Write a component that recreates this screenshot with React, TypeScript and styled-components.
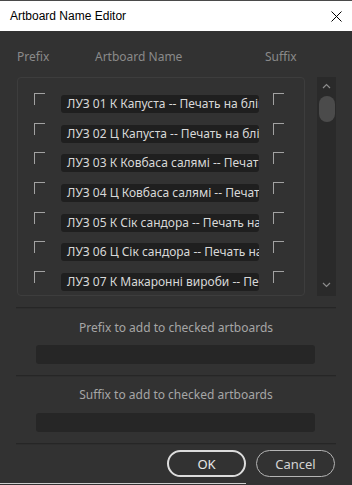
import styled, { createGlobalStyle } from "styled-components";

const GlobalStyle = createGlobalStyle`
    html, body {
        margin: 0;
        padding: 0;
        background: #323232;
    }
    * {
        box-sizing: border-box;
    }
`;

const Window = styled.div`
    width: 352px;
    height: 485px;
    display: flex;
    flex-direction: column;
    background: #323232;
    font-family: "Noto Sans", "Liberation Sans", sans-serif;
    font-size: 12px;
    overflow: hidden;
`;
const TitleBar = styled.div`
    height: 31px;
    flex: none;
    display: flex;
    align-items: center;
    justify-content: space-between;
    padding: 0 10px 0 10px;
    background: #ffffff;
    border-top: 1px solid #4a4a4a;
    color: #000;
    font-family: "Liberation Sans", Arial, sans-serif;
    font-size: 12px;
`;
const CloseButton = styled.div`
    width: 12px;
    height: 12px;
    display: flex;
    align-items: center;
    justify-content: center;
`;
const Body = styled.div`
    flex: 1;
    display: flex;
    flex-direction: column;
    padding: 0 16px;
`;
const HeaderRow = styled.div`
    display: flex;
    margin-top: 19px;
    height: 14px;
    line-height: 14px;
    color: #8a8a8a;
`;
const HeaderCell = styled.div<{ $w?: number; $pl?: number }>`
    width: ${(p) => (p.$w ? `${p.$w}px` : "auto")};
    padding-left: ${(p) => p.$pl ?? 0}px;
    flex: none;
`;
const ListArea = styled.div`
    display: flex;
    gap: 12px;
    margin-top: 13px;
    margin-left: 1px;
    height: 219px;
`;
const ListPanel = styled.div`
    width: 288px;
    height: 100%;
    border: 1px solid #3d3d3d;
    border-radius: 4px;
    padding-top: 15px;
    overflow: hidden;
`;
const Row = styled.div`
    display: flex;
    align-items: flex-start;
    height: 29.67px;
    padding-left: 16px;
`;
const CheckBox = styled.div<{ $ml?: number }>`
    width: 11px;
    height: 12px;
    flex: none;
    margin-left: ${(p) => p.$ml ?? 0}px;
    border-top: 1px solid #a2a2a2;
    border-left: 1px solid #a2a2a2;
`;
const NameField = styled.div`
    width: 198px;
    height: 18px;
    margin-top: 2px;
    margin-left: 16px;
    flex: none;
    padding: 0 6px;
    background: #1f1f1f;
    border-radius: 3px;
    color: #d8d8d8;
    line-height: 18px;
    white-space: nowrap;
    overflow: hidden;
`;
const ScrollTrack = styled.div`
    width: 19px;
    height: 100%;
    background: #2a2a2a;
    display: flex;
    flex-direction: column;
    align-items: center;
    padding-top: 6px;
`;
const ScrollThumb = styled.div`
    width: 16px;
    height: 26px;
    margin-top: 7px;
    border-radius: 8px;
    background: #4b4b4b;
`;
const ScrollSpacer = styled.div<{ $h?: number }>`
    flex: ${(p) => (p.$h ? "none" : "1")};
    height: ${(p) => (p.$h ? `${p.$h}px` : "auto")};
`;
const Separator = styled.div<{ $mt: number }>`
    margin-top: ${(p) => p.$mt}px;
    height: 2px;
    border-top: 1px solid #262626;
    border-bottom: 1px solid #2e2e2e;
`;
const SectionLabel = styled.div<{ $mt: number }>`
    margin-top: ${(p) => p.$mt}px;
    height: 14px;
    line-height: 14px;
    text-align: center;
    color: #a6a6a6;
`;
const TextInput = styled.div<{ $mt: number }>`
    margin: ${(p) => p.$mt}px 21px 0 20px;
    height: 19px;
    background: #262626;
    border-radius: 3px;
`;
const ButtonRow = styled.div`
    display: flex;
    justify-content: flex-end;
    gap: 10px;
    margin-top: 5px;
    margin-right: 1px;
`;
const Button = styled.div<{ $primary?: boolean }>`
    width: 79px;
    height: 27px;
    border-radius: 14px;
    display: flex;
    align-items: center;
    justify-content: center;
    font-size: 13px;
    color: ${(p) => (p.$primary ? "#e8e8e8" : "#d4d4d4")};
    border: ${(p) => (p.$primary ? "2px solid #dcdcdc" : "1px solid #b4b4b4")};
`;
const BottomEdge = styled.div`
    margin-top: auto;
    height: 2px;
    display: flex;
`;
const BottomLine = styled.div`
    width: 246px;
    height: 1px;
    background: #cfcfcf;
`;

const names = [
    "ЛУЗ 01 К Капуста -- Печать на бліц",
    "ЛУЗ 02 Ц Капуста -- Печать на бліц",
    "ЛУЗ 03 К Ковбаса салямі -- Печать на бліц",
    "ЛУЗ 04 Ц Ковбаса салямі -- Печать на бліц",
    "ЛУЗ 05 К Сік сандора -- Печать на бліц",
    "ЛУЗ 06 Ц Сік сандора -- Печать на бліц",
    "ЛУЗ 07 К Макаронні вироби -- Печать на бліц",
];

const Chevron = ({ up }: { up?: boolean }) => (
    <svg width="9" height="6" viewBox="0 0 9 6">
        <path
            d={up ? "M1 5 L4.5 1.5 L8 5" : "M1 1 L4.5 4.5 L8 1"}
            fill="none"
            stroke="#8c8c8c"
            strokeWidth="1.2"
        />
    </svg>
);

export default function App() {
    return (
        <Window>
            <GlobalStyle />
            <TitleBar>
                <span>Artboard Name Editor</span>
                <CloseButton>
                    <svg width="11" height="11" viewBox="0 0 11 11">
                        <path d="M0.5 0.5 L10.5 10.5 M10.5 0.5 L0.5 10.5" stroke="#000" strokeWidth="1" />
                    </svg>
                </CloseButton>
            </TitleBar>
            <Body>
                <HeaderRow>
                    <HeaderCell $w={79} $pl={1}>Prefix</HeaderCell>
                    <HeaderCell $w={170}>Artboard Name</HeaderCell>
                    <HeaderCell>Suffix</HeaderCell>
                </HeaderRow>
                <ListArea>
                    <ListPanel>
                        {names.map((n) => (
                            <Row key={n}>
                                <CheckBox />
                                <NameField>{n}</NameField>
                                <CheckBox $ml={14} />
                            </Row>
                        ))}
                    </ListPanel>
                    <ScrollTrack>
                        <Chevron up />
                        <ScrollThumb />
                        <ScrollSpacer />
                        <Chevron />
                        <ScrollSpacer $h={8} />
                    </ScrollTrack>
                </ListArea>
                <Separator $mt={11} />
                <SectionLabel $mt={12}>Prefix to add to checked artboards</SectionLabel>
                <TextInput $mt={10} />
                <Separator $mt={11} />
                <SectionLabel $mt={11}>Suffix to add to checked artboards</SectionLabel>
                <TextInput $mt={11} />
                <Separator $mt={11} />
                <ButtonRow>
                    <Button $primary>OK</Button>
                    <Button>Cancel</Button>
                </ButtonRow>
            </Body>
            <BottomEdge>
                <BottomLine />
            </BottomEdge>
        </Window>
    );
}
